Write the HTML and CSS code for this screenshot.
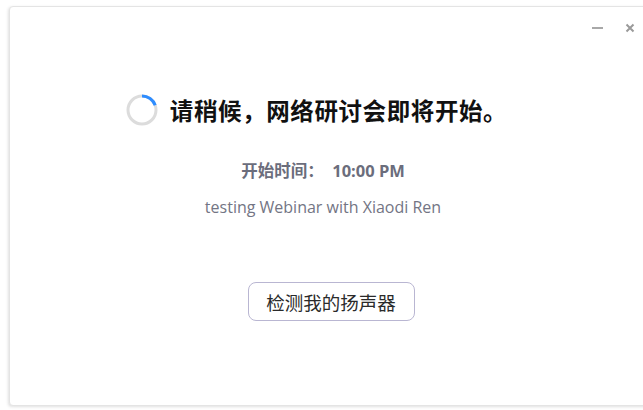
FILE: index.html
```html
<!DOCTYPE html>
<html lang="zh-CN">
<head>
<meta charset="utf-8">
<title>网络研讨会</title>
<link rel="stylesheet" href="styles.css">
</head>
<body>
<div class="window">
  <div class="titlebar">
    <span class="win-btn minimize" aria-label="最小化"></span>
    <span class="win-btn close" aria-label="关闭">
      <svg width="10" height="10" viewBox="0 0 10 10"><path d="M1.5 1.5L8.5 8.5M8.5 1.5L1.5 8.5" stroke="#9a9a9a" stroke-width="2"/></svg>
    </span>
  </div>
  <div class="content">
    <div class="heading">
      <svg class="spinner" width="32" height="32" viewBox="0 0 32 32">
        <circle cx="16" cy="16" r="14" fill="none" stroke="#dcdcdc" stroke-width="3"/>
        <path d="M16 2 A14 14 0 0 1 29.2 11.3" fill="none" stroke="#2d8cff" stroke-width="3"/>
      </svg>
      <h1 class="title">请稍候，网络研讨会即将开始。</h1>
    </div>
    <p class="start-time">开始时间：&nbsp; 10:00 PM</p>
    <p class="topic">testing Webinar with Xiaodi Ren</p>
    <button class="test-btn">检测我的扬声器</button>
  </div>
</div>
</body>
</html>
```
FILE: styles.css
```css
html, body {
  margin: 0;
  padding: 0;
  background: #ffffff;
  overflow: hidden;
}

body {
  width: 643px;
  height: 410px;
  font-family: "Open Sans", "Noto Sans CJK SC", sans-serif;
}

.window {
  margin: 6px 0 0 9px;
  width: 660px;
  height: 400px;
  box-sizing: border-box;
  border: 1px solid #e4e4e4;
  border-radius: 4px;
  box-shadow: -1px 1px 3px rgba(0, 0, 0, 0.12);
  background: #ffffff;
  display: flex;
  flex-direction: column;
}

.titlebar {
  height: 42px;
  display: flex;
  justify-content: flex-end;
  align-items: center;
  padding-right: 32px;
  gap: 21px;
}

.win-btn {
  display: flex;
  align-items: center;
  justify-content: center;
  width: 12px;
  height: 12px;
}

.minimize::before {
  content: "";
  display: block;
  width: 11px;
  height: 2px;
  background: #a8a8a8;
}

.content {
  display: flex;
  flex-direction: column;
  align-items: center;
  width: 643px;
  padding-right: 17px;
  box-sizing: border-box;
}

.heading {
  display: flex;
  align-items: center;
  gap: 12px;
  margin-top: 45px;
  margin-right: 13px;
}

.spinner {
  display: block;
}

.title {
  margin: 0;
  font-family: "Noto Sans CJK SC", sans-serif;
  font-size: 23.5px;
  letter-spacing: 0.6px;
  font-weight: 700;
  color: #111111;
  line-height: 30px;
}

.start-time {
  margin: 33px 0 0 0;
  font-family: "Open Sans", "Noto Sans CJK SC", sans-serif;
  font-size: 16.5px;
  font-weight: 700;
  color: #6b6d7c;
  line-height: 24px;
}

.topic {
  margin: 13px 0 0 0;
  font-family: "Open Sans", sans-serif;
  font-size: 16px;
  color: #737584;
  line-height: 22px;
}

.test-btn {
  margin-top: 64px;
  margin-left: 16px;
  width: 167px;
  height: 39px;
  border: 1px solid #b9b6d2;
  border-radius: 8px;
  background: #ffffff;
  font-family: "Noto Sans CJK SC", sans-serif;
  font-size: 18.5px;
  color: #2a2a2a;
  padding: 0;
}
```
